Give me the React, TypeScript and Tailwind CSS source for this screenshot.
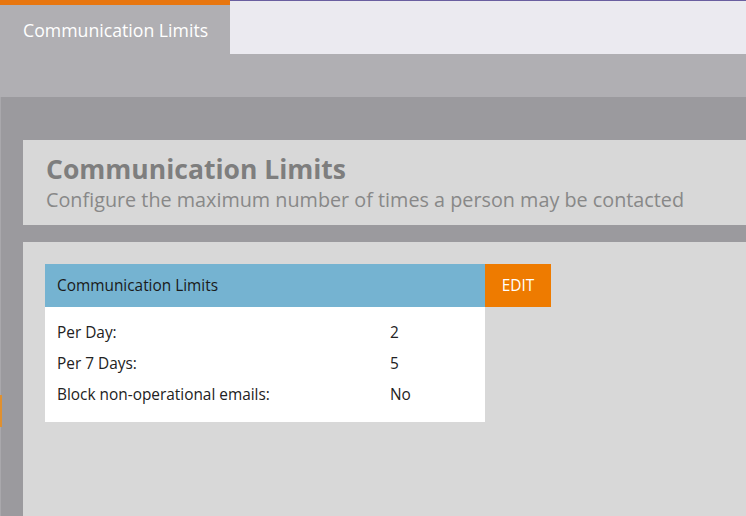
import React from "react";

export default function App() {
  const rows = [
    ["Per Day:", "2"],
    ["Per 7 Days:", "5"],
    ["Block non-operational emails:", "No"],
  ];
  return (
    <div
      className="w-[746px] h-[516px] overflow-hidden flex flex-col bg-[#9b9a9e]"
      style={{ fontFamily: '"Open Sans", "Noto Sans", sans-serif' }}
    >
      {/* tab row */}
      <div className="flex h-[54px] bg-[#b0afb3]">
        <div className="w-[230px] flex flex-col">
          <div className="h-[5px] bg-[#e8760f]" />
          <div className="flex-1 pl-[23px] pt-[13px] text-[17.7px] leading-[24px] text-white">
            Communication Limits
          </div>
        </div>
        <div className="flex-1 bg-[#ebeaf0] border-t border-[#6a5fa0]" />
      </div>
      {/* band */}
      <div className="h-[43px] bg-[#b0afb3]" />
      {/* body */}
      <div className="flex-1 flex relative">
        <div className="w-[1px] bg-[#a9a8ac]" />
        <div className="absolute left-0 top-[298px] w-[2px] h-[32px] bg-[#e0902f]" />
        <div className="flex-1 flex flex-col pt-[43px] pl-[22px]">
          <div className="h-[85px] bg-[#d8d8d8] pl-[23px] pt-[13px]">
            <div className="text-[26.5px] leading-[33px] font-bold text-[#7e7e7e]">
              Communication Limits
            </div>
            <div className="text-[19.8px] leading-[28px] text-[#888888]">
              Configure the maximum number of times a person may be contacted
            </div>
          </div>
          <div className="h-[17px]" />
          <div className="flex-1 bg-[#d8d8d8] pl-[22px] pt-[22px]">
            <div className="flex">
              <div className="w-[440px]">
                <div className="h-[43px] bg-[#75b3d1] flex items-center pl-[12px] text-[15.4px] text-[#1a1a1a]">
                  Communication Limits
                </div>
                <div className="bg-white pt-[10px] pb-[12px]">
                  {rows.map(([k, v]) => (
                    <div key={k} className="flex h-[31px] items-center text-[15.4px] text-[#222]">
                      <div className="w-[345px] pl-[12px]">{k}</div>
                      <div>{v}</div>
                    </div>
                  ))}
                </div>
              </div>
              <div className="w-[66px] h-[43px] bg-[#ee7b00] flex items-center justify-center text-[15.4px] text-white">
                EDIT
              </div>
            </div>
          </div>
        </div>
      </div>
    </div>
  );
}
